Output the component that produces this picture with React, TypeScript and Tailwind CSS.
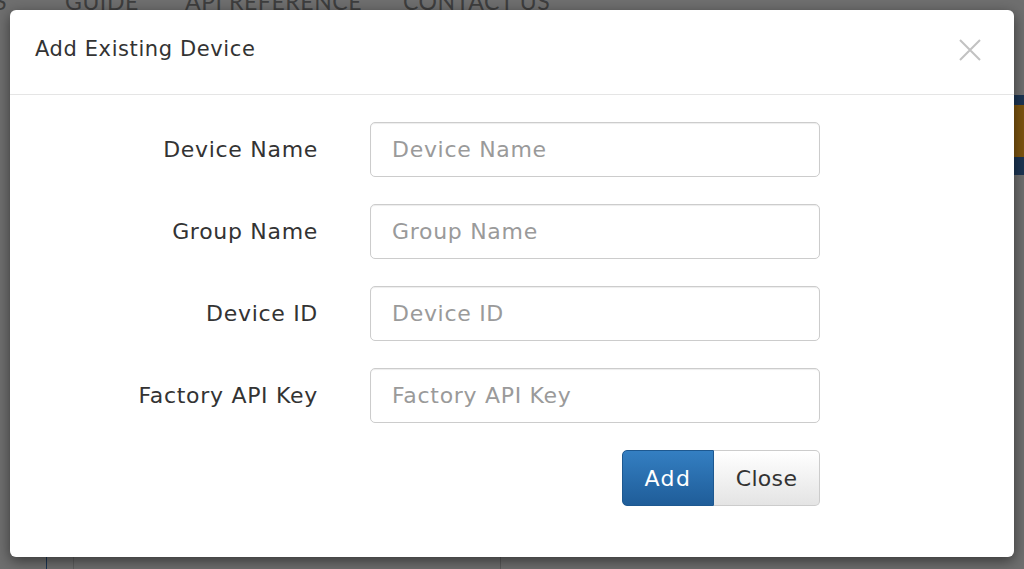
const fields = ['Device Name', 'Group Name', 'Device ID', 'Factory API Key'];

export default function App() {
  return (
    <div
      className="relative w-[1024px] h-[569px] overflow-hidden bg-[#6f6f6f]"
      style={{ fontFamily: '"DejaVu Sans", Lato, sans-serif' }}
    >
      {/* dimmed page behind the modal */}
      <div
        className="flex items-end h-[10px] text-[23px] leading-none text-[#3e3e3e] tracking-wide"
        style={{ fontFamily: 'Lato, sans-serif' }}
      >
        <span className="-ml-[6px] -mb-[3px] w-[71px]">S</span>
        <span className="-mb-[3px] w-[120px]">GUIDE</span>
        <span className="-mb-[3px] w-[218px]">API REFERENCE</span>
        <span className="-mb-[3px]">CONTACT US</span>
      </div>
      <div className="absolute right-0 top-[95px] w-[12px] h-[80px] flex flex-col">
        <div className="h-[10px] bg-[#1c3553]" />
        <div className="h-[52px] bg-[#7d5510]" />
        <div className="h-[18px] bg-[#1c3553]" />
      </div>
      <div className="absolute left-[46px] top-[540px] w-px h-[29px] bg-[#1c3553]" />
      <div className="absolute left-[73px] top-[540px] w-px h-[29px] bg-[#5f5f5f]" />
      <div className="absolute left-[500px] top-[540px] w-px h-[29px] bg-[#5a5a5a]" />

      {/* modal */}
      <div className="absolute left-[10px] top-[10px] w-[1004px] h-[547px] bg-white rounded-[6px] shadow-[0_4px_14px_rgba(0,0,0,0.5)] flex flex-col">
        <div className="h-[85px] flex items-center justify-between pl-[25px] pr-[33px] pb-[4px] border-b border-[#e5e5e5]">
          <h2 className="text-[21px] text-[#333] tracking-[0.6px]">Add Existing Device</h2>
          <svg width="22" height="22" viewBox="0 0 22 22" className="text-[#c2c2c2]">
            <path d="M1 1L21 21M21 1L1 21" stroke="currentColor" strokeWidth="2" fill="none" />
          </svg>
        </div>
        <div className="pt-[27px] flex flex-col gap-[27px]">
          {fields.map((f) => (
            <div key={f} className="flex items-center">
              <label className="w-[308px] text-right text-[22px] text-[#333] tracking-[0.7px]">{f}</label>
              <div className="ml-[52px] w-[450px] h-[55px] border border-[#cccccc] rounded-[5px] flex items-center pl-[21px] text-[22px] text-[#9a9a9a] tracking-[0.7px] shadow-[inset_0_1px_1px_rgba(0,0,0,0.075)]">
                {f}
              </div>
            </div>
          ))}
          <div className="flex w-[810px] justify-end">
            <button className="w-[92px] h-[56px] rounded-l-[5px] text-white text-[22px] tracking-[1.5px] bg-gradient-to-b from-[#347fc2] to-[#1f5d99] border border-[#1d5890]">
              Add
            </button>
            <button className="w-[106px] h-[56px] rounded-r-[5px] text-[#333] text-[22px] tracking-[0.3px] bg-gradient-to-b from-white to-[#e4e4e4] border border-l-0 border-[#cccccc]">
              Close
            </button>
          </div>
        </div>
      </div>
    </div>
  );
}
